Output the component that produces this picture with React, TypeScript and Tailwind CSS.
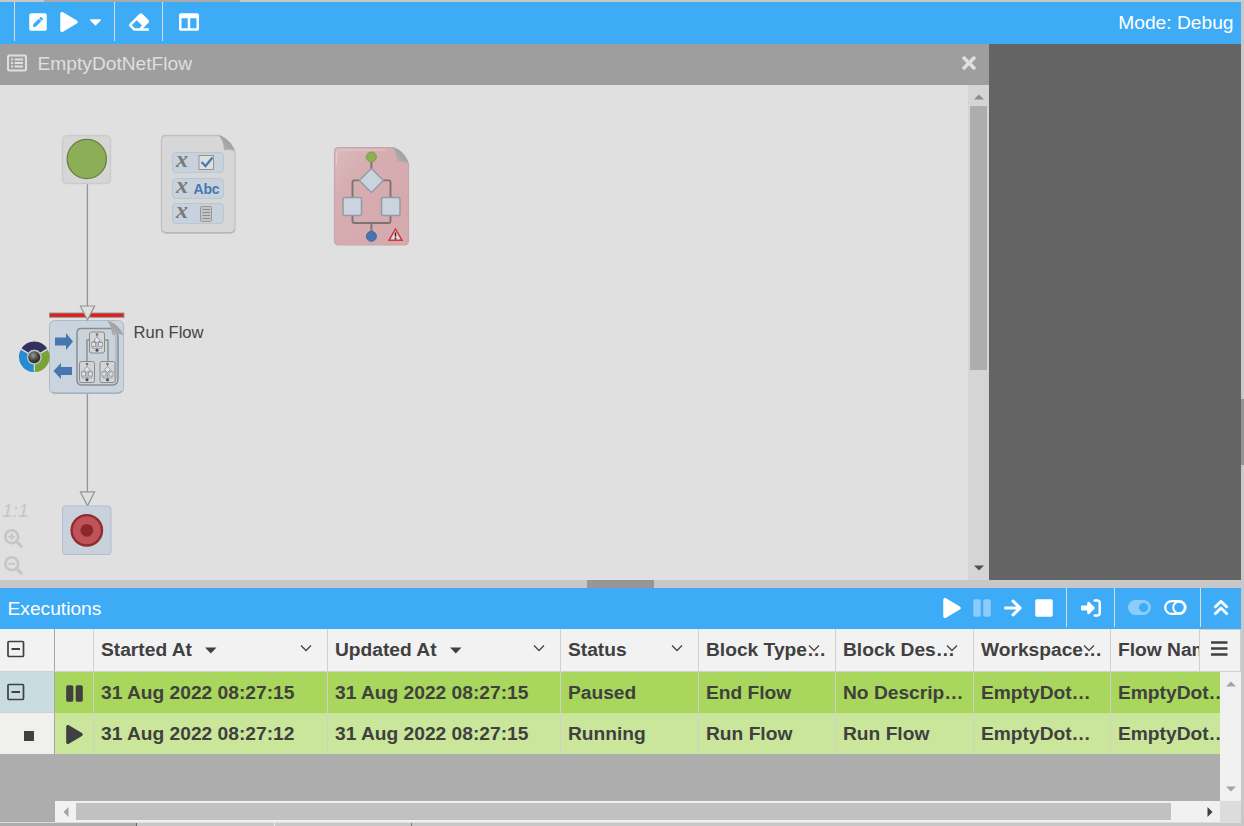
import type { ReactNode } from "react";
import {
  FaArrowRight,
  FaCaretDown,
  FaColumns,
  FaEraser,
  FaPause,
  FaPenSquare,
  FaPlay,
  FaSearchMinus,
  FaSearchPlus,
  FaStop,
  FaTimes,
} from "react-icons/fa";
import { FaAnglesUp, FaRightToBracket } from "react-icons/fa6";

function Slot({ w, children }: { w: string; children?: ReactNode }) {
  return <div className={`flex h-full shrink-0 items-center justify-center ${w}`}>{children}</div>;
}

function Divider() {
  return <div className="h-[39px] w-px shrink-0 self-start bg-[#d9dde0]" />;
}

function Toolbar() {
  return (
    <div className="flex h-[42px] items-center bg-[#3dabf5] pr-[7.500px] text-white">
      <Slot w="w-[14px]" />
      <Divider />
      <Slot w="w-[45px] pb-[2px]"><FaPenSquare size={20} /></Slot>
      <Slot w="w-[17px] pb-[2px]"><FaPlay size={20} className="shrink-0" /></Slot>
      <Slot w="w-[37px] pb-[3px]"><FaCaretDown size={19} /></Slot>
      <Divider />
      <Slot w="w-[47px] pb-[2px]"><FaEraser size={20} /></Slot>
      <Divider />
      <Slot w="w-[51px] pb-[2px]"><FaColumns size={20} /></Slot>
      <div className="ml-auto pb-px text-[19.200px] leading-none">Mode: Debug</div>
    </div>
  );
}

function MiniFlow({ x, y }: { x: number; y: number }) {
  return (
    <g transform={`translate(${x} ${y})`} strokeWidth="1">
      <rect x="0.5" y="0.5" width="15" height="21" rx="2" fill="#d5d5d5" stroke="#8a8a8a" />
      <path d="M8 2v17M3.500 13v-3h9v3M3.500 13v4h9v-4" fill="none" stroke="#a0a0a0" />
      <path d="M8 5.500l3 3-3 3-3-3z" fill="#dce4ea" stroke="#9aa3ab" />
      <rect x="2.500" y="11" width="4" height="4" fill="#dce4ea" stroke="#9aa3ab" />
      <rect x="9.500" y="11" width="4" height="4" fill="#dce4ea" stroke="#9aa3ab" />
      <circle cx="8" cy="3" r="1.300" fill="#777" />
      <circle cx="8" cy="18.700" r="1.500" fill="#4a4480" />
    </g>
  );
}

function VariableChip({ y, children }: { y: number; children: ReactNode }) {
  return (
    <g>
      <rect x="172.500" y={y} width="51" height="20" rx="3.500" fill="#c8d2dc" stroke="#b9c7d5" />
      <text x="176" y={y + 14.500} fontSize="24" fontStyle="italic" fontWeight="bold" fill="#7a7a7a" className="font-['Liberation_Serif',serif]">
        x
      </text>
      {children}
    </g>
  );
}

function Diagram() {
  return (
    <svg width="968" height="495" viewBox="0 85 968 495" className="block">
      <defs>
        <linearGradient id="fold" x1="0" y1="1" x2="1" y2="0">
          <stop offset="0" stopColor="#b8b8b8" />
          <stop offset="1" stopColor="#909090" />
        </linearGradient>
        <radialGradient id="ball" cx=".4" cy=".35">
          <stop offset="0" stopColor="#999" />
          <stop offset="1" stopColor="#333" />
        </radialGradient>
        <linearGradient id="pink" x1="0" y1="0" x2="1" y2="1">
          <stop offset="0" stopColor="#dbbabd" />
          <stop offset=".3" stopColor="#d6adb1" />
          <stop offset="1" stopColor="#d5a9ad" />
        </linearGradient>
      </defs>

      <path d="M87.400 184v122M87.400 394v98" stroke="#949494" strokeWidth="1.300" />

      <rect x="62.500" y="135.500" width="48" height="48" rx="4.500" fill="#d6d6d6" stroke="#cbcbcb" strokeWidth="1.500" />
      <circle cx="86.800" cy="159" r="19.600" fill="#8dae57" stroke="#66803f" strokeWidth="1.300" />

      <path d="M166 135.500H219q5 3 5.500 14q6-1 10.500 2v77q0 4.500-4.500 4.500H166q-4.500 0-4.500-4.500V140q0-4.500 4.500-4.500z" fill="#d7d7d7" stroke="#c0c0c0" strokeWidth="1.300" />
      <path d="M163.500 231q1.500 1.800 4 1.800h62q4 0 5-3.500" fill="none" stroke="#b2b2b2" />
      <path d="M219 135c7 2.500 13 8 16 15.500-4-1.500-8-1.500-11-.5 0-6-2-11-5-15z" fill="url(#fold)" />
      <VariableChip y={152.500}>
        <rect x="199" y="155.500" width="14.500" height="14" fill="#dfdfdf" stroke="#959595" />
        <path d="M201.500 162l4 4 7-8.500" fill="none" stroke="#4679b5" strokeWidth="2.200" />
      </VariableChip>
      <VariableChip y={178.500}>
        <text x="193.500" y="194" fontSize="14" fontWeight="bold" fill="#4678b3" textLength="26" className="font-['Liberation_Sans',sans-serif]">
          Abc
        </text>
      </VariableChip>
      <VariableChip y={203.500}>
        <rect x="200.500" y="206.500" width="11" height="15" rx="1" fill="#c4c4c4" stroke="#979797" />
        <path d="M202.500 209.500h7.500m-7.500 3h7.500m-7.500 3h7.500m-7.500 3h7.500" stroke="#8a8a8a" strokeWidth="1.200" />
      </VariableChip>

      <path d="M338.500 147.500H393q4 4 4 14.500q6-1.500 11.500 1v77.500q0 4.500-4.500 4.500h-65.500q-4 0-4-4.500V152q0-4.500 4-4.500z" fill="url(#pink)" stroke="#c7a5a8" strokeWidth="1.200" />
      <path d="M336.500 165v-10q0-5 5-5h44" fill="none" stroke="#e2cbcd" strokeWidth="1.200" />
      <path d="M393 147c7 2 13 8 15.500 15.500-4-1-8-1-11.500-.5 1-5-1-11-4-15z" fill="url(#fold)" />
      <g fill="none" stroke="#7a7474" strokeWidth="1.900">
        <path d="M371.400 161v9M361 180.400h-7q-1.500 0-1.500 2V197M382 180.400h7q1.500 0 1.500 2V197M352.500 215v6q0 2 2 2h34q2 0 2-2v-6M371.400 223v9" />
      </g>
      <circle cx="371.400" cy="157" r="5" fill="#8fb052" stroke="#84994f" />
      <path d="M371.400 168.500l12 12-12 12-12-12z" fill="#cbd4de" stroke="#929ba4" strokeWidth="1.400" />
      <rect x="343" y="197.500" width="18.500" height="18" rx="1.500" fill="#cbd4de" stroke="#929ba4" strokeWidth="1.500" />
      <rect x="381.500" y="197.500" width="18.500" height="18" rx="1.500" fill="#cbd4de" stroke="#929ba4" strokeWidth="1.500" />
      <circle cx="371.400" cy="236.300" r="5" fill="#4874b5" stroke="#4468a0" />
      <path d="M395.500 229l6.500 11.300h-13z" fill="#e4dada" stroke="#cf3539" strokeWidth="1.500" />
      <path d="M395.500 232.500v4m0 1v2" stroke="#222" strokeWidth="1.500" />

      <rect x="49.500" y="320.500" width="74" height="73" rx="5" fill="#c9d4de" stroke="#aeb9c3" />
      <path d="M52 391.800q1 1.200 4 1.200h60q4 0 6-2" fill="none" stroke="#9aa8b5" />
      <path d="M55 337.500h11v-4.500l7 8.500-7 8.500v-4.500H55zM72 367H61v-4l-7.500 8 7.500 8v-4h11z" fill="#4777af" />
      <path d="M81 328.500h30q6 2 7 8v42q0 6-5 6.500H82q-5 0-5-5v-47q0-4.500 4-4.500z" fill="#cbd3da" stroke="#868d95" strokeWidth="1.500" />
      <path d="M114 334q2 2 2 5v39q0 4-4 5" fill="none" stroke="#9eabb7" />
      <path d="M91 340h-4v23M104 340h4v23" fill="none" stroke="#8c9197" strokeWidth="1.500" />
      <MiniFlow x={89} y={331.500} />
      <MiniFlow x={79} y={361} />
      <MiniFlow x={99.500} y={361} />
      <path d="M107 320.500c8 2 14 8 16.500 15-4-2-8-2-11.500-.5 0-6-2-11-5-14.500z" fill="url(#fold)" />
      <rect x="49.500" y="313" width="74.500" height="4.300" fill="#de1d1f" stroke="#969696" strokeWidth="1" />
      <path d="M80.400 306h14.200L87.500 320zM80.400 491.800h14.200l-7.100 14z" fill="#e0e0e0" stroke="#949494" strokeWidth="1.200" />

      <g fill="none" strokeWidth="8.200">
        <path d="M25 350.800A11 11 0 0 1 43.800 351" stroke="#32315f" />
        <path d="M24.400 351.800A11 11 0 0 0 34.100 368" stroke="#268bd1" />
        <path d="M44.200 351.800A11 11 0 0 1 34.500 368" stroke="#7aa337" />
        <path d="M34.300 357v14M34.300 357l-13-8M34.300 357l13-8" stroke="#d5dadd" strokeWidth="1.200" />
      </g>
      <circle cx="34.300" cy="357.200" r="7.500" fill="#b9bec2" />
      <circle cx="34.300" cy="357.200" r="6" fill="url(#ball)" />

      <rect x="62.500" y="506" width="48.500" height="48.500" rx="3" fill="#c8d2dc" stroke="#b2bdc8" />
      <circle cx="86.800" cy="530.300" r="15.200" fill="#c05359" stroke="#922c2c" strokeWidth="2.400" />
      <circle cx="86.800" cy="530.300" r="6.400" fill="#8b2928" />
    </svg>
  );
}

function Triangle({ d, fill }: { d: string; fill: string }) {
  return (
    <svg width="10" height="10" viewBox="0 0 10 10" className="block" fill={fill}>
      <path d={d} />
    </svg>
  );
}

const UP = "M0 7.500L5 2.500L10 7.500Z";
const DOWN = "M0 2.500H10L5 7.500Z";
const LEFT = "M7.500 0V10L2.500 5Z";
const RIGHT = "M2.500 0V10L7.500 5Z";

function ListIcon() {
  return (
    <svg width="20" height="18" viewBox="0 0 20 18" fill="none" stroke="currentColor">
      <rect x="1" y="1.500" width="18" height="15" rx="1.500" strokeWidth="2" />
      <path d="M7.500 5.500H16M7.500 9H16M7.500 12.500H16M4 5.500h2M4 9h2M4 12.500h2" strokeWidth="2" />
    </svg>
  );
}

function Workspace() {
  return (
    <div className="flex h-[536px]">
      <div className="flex w-[989px] flex-col">
        <div className="flex h-[41px] items-center bg-[#9e9e9e] pr-[10px] pb-[3px] pl-[7px] text-[#dfdfdf]">
          <ListIcon />
          <div className="mt-[2px] ml-[10.500px] text-[19.200px] leading-none">EmptyDotNetFlow</div>
          <FaTimes size={20} className="ml-auto" />
        </div>
        <div className="flex h-[495px] bg-[#e0e0e0]">
          <div className="relative w-[968px]">
            <Diagram />
            <div className="absolute top-[238px] left-[133.500px] text-[16.600px] leading-[20px] whitespace-nowrap text-[#454545]">Run Flow</div>
            <div className="absolute top-[415px] left-[2px] flex flex-col text-[#c6c6c6]">
              <span className="text-[19.200px] leading-[22px] italic">1:1</span>
              <FaSearchPlus size={19} className="mt-[7px] ml-[1.500px]" />
              <FaSearchMinus size={19} className="mt-[8px] ml-[1.500px]" />
            </div>
          </div>
          <div className="flex w-[21px] flex-col items-center bg-[#d5d5d5]">
            <div className="flex h-[21px] items-center pt-[3px]"><Triangle d={UP} fill="#8d8d8d" /></div>
            <div className="h-[264px] w-[17px] bg-[#adadad]" />
            <div className="mt-auto flex h-[21px] items-center pb-[3px]"><Triangle d={DOWN} fill="#505050" /></div>
          </div>
        </div>
      </div>
      <div className="flex-1 bg-[#646464]" />
    </div>
  );
}

function Toggle({ on }: { on: boolean }) {
  return on ? (
    <svg width="23" height="16" viewBox="0 0 23 16" className="opacity-40">
      <rect x="0" y="0" width="23" height="15" rx="7.500" fill="currentColor" />
      <circle cx="15.500" cy="7.500" r="4.500" fill="#3dabf5" />
    </svg>
  ) : (
    <svg width="23" height="16" viewBox="0 0 23 16" fill="none" stroke="currentColor" strokeWidth="2.200">
      <rect x="1.200" y="1.100" width="20.300" height="12.800" rx="6.400" />
      <circle cx="15" cy="7.500" r="5.800" strokeWidth="2" />
    </svg>
  );
}

function ExecutionsBar() {
  return (
    <div className="flex h-[41px] items-center bg-[#3dabf5] text-white">
      <div className="w-[936px] pl-[7.500px] text-[19.200px] leading-none">Executions</div>
      <Slot w="w-[31px] pb-px"><FaPlay size={20} /></Slot>
      <Slot w="w-[30px] pb-px"><FaPause size={20} className="opacity-40" /></Slot>
      <Slot w="w-[31px] pb-px"><FaArrowRight size={20} /></Slot>
      <Slot w="w-[31px] pb-px"><FaStop size={20} /></Slot>
      <Slot w="w-[7px]" />
      <Divider />
      <Slot w="w-[47px] pb-px"><FaRightToBracket size={20} /></Slot>
      <Divider />
      <Slot w="w-[6px]" />
      <Slot w="w-[37px] pb-px"><Toggle on /></Slot>
      <Slot w="w-[35px] pb-px"><Toggle on={false} /></Slot>
      <Slot w="w-[7px]" />
      <Divider />
      <Slot w="w-[40px] pb-px"><FaAnglesUp size={18} stroke="currentColor" strokeWidth={22} /></Slot>
    </div>
  );
}

const columns = [
  { label: "Started At", width: "w-[234px]", sorted: true, rows: ["31 Aug 2022 08:27:15", "31 Aug 2022 08:27:12"] },
  { label: "Updated At", width: "w-[233px]", sorted: true, rows: ["31 Aug 2022 08:27:15", "31 Aug 2022 08:27:15"] },
  { label: "Status", width: "w-[138px]", rows: ["Paused", "Running"] },
  { label: "Block Type…", width: "w-[137px]", rows: ["End Flow", "Run Flow"] },
  { label: "Block Des…", width: "w-[138px]", rows: ["No Descrip…", "Run Flow"] },
  { label: "Workspace…", width: "w-[137px]", rows: ["EmptyDot…", "EmptyDot…"] },
  { label: "Flow Name", width: "w-[138px]", rows: ["EmptyDot…", "EmptyDot…"] },
];

function Collapse() {
  return (
    <svg width="18" height="18" viewBox="0 0 18 18" fill="none" stroke="#404040" strokeWidth="1.700">
      <rect x="1" y="1.500" width="15.500" height="15" rx="1" />
      <path d="M4.500 9h8.500" strokeWidth="2" />
    </svg>
  );
}

function GridHeader() {
  return (
    <div className="flex h-[43px] border-b border-[#d0d0d0] bg-[#f2f2f2]">
      <div className="flex w-[55px] items-center border-r border-[#a6a6a6] pb-[2px] pl-[7px]"><Collapse /></div>
      <div className="flex w-[1144px] overflow-hidden">
        <div className="w-[39px] shrink-0 border-r border-[#d0d0d0]" />
        {columns.map((c) => (
          <div key={c.label} className={`relative flex shrink-0 items-center border-r border-[#d0d0d0] pb-px pl-[7px] whitespace-nowrap ${c.width}`}>
            {c.label}
            {c.sorted && (
              <svg width="12" height="7" viewBox="0 0 12 7" className="mt-px ml-[13px]">
                <path d="M0 .5h11.500L5.800 6.500z" fill="#404040" />
              </svg>
            )}
            <svg width="12" height="8" viewBox="0 0 12 8" className="absolute top-[15px] right-[15px]" fill="none" stroke="#454545" strokeWidth="1.300">
              <path d="M1 1.500l5 5 5-5" />
            </svg>
          </div>
        ))}
      </div>
      <div className="flex flex-1 items-center border border-b-0 border-[#d0d0d0] pb-[4px] pl-[11px]">
        <svg width="17" height="15" viewBox="0 0 17 15" stroke="#404040" strokeWidth="2.500">
          <path d="M0 1.500h16.500M0 7.500h16.500M0 13.500h16.500" />
        </svg>
      </div>
    </div>
  );
}

function GridRow({ index }: { index: number }) {
  const paused = index === 0;
  return (
    <div className={`flex h-[41px] overflow-hidden ${paused ? "bg-[#a9d65c]" : "bg-[#c9e69a]"}`}>
      <div className={`flex w-[55px] shrink-0 items-center border-r border-[#a6a6a6] ${paused ? "border-b border-b-[#d0d0d0] bg-[#c9dcdf] pb-px pl-[7px]" : "bg-[#f0f0ee] pt-[4px] pl-[24px]"}`}>
        {paused ? <Collapse /> : <div className="size-[10px] bg-[#404040]" />}
      </div>
      <div className="flex w-[39px] shrink-0 items-center justify-center border-r border-[#d0d0d0] pt-[2px]">
        {paused ? <FaPause size={19} /> : <FaPlay size={19} />}
      </div>
      {columns.map((c) => (
        <div key={c.label} className={`flex shrink-0 items-center border-r border-[#d0d0d0] pl-[7px] whitespace-nowrap ${c.width}`}>
          {c.rows[index]}
        </div>
      ))}
    </div>
  );
}

function Grid() {
  return (
    <div className="text-[19.200px] leading-none font-bold text-[#404040]">
      <GridHeader />
      <div className="flex h-[150px]">
        <div className="flex w-[1220px] flex-col bg-[#adadad]">
          <GridRow index={0} />
          <GridRow index={1} />
          <div className="mt-auto ml-[55px] flex h-[21px] items-center bg-[#f1f1f1]">
            <div className="flex w-[21px] justify-center"><Triangle d={LEFT} fill="#a3a3a3" /></div>
            <div className="h-[17px] w-[1095px] bg-[#c1c1c1]" />
            <div className="ml-auto flex w-[21px] justify-center"><Triangle d={RIGHT} fill="#404040" /></div>
          </div>
        </div>
        <div className="flex flex-1 flex-col">
          <div className="flex flex-1 flex-col items-center justify-between bg-[#f1f1f1] pt-[7px] pb-[7px]">
            <Triangle d={UP} fill="#a3a3a3" />
            <Triangle d={DOWN} fill="#a3a3a3" />
          </div>
          <div className="h-[21px] bg-[#dcdcdc]" />
        </div>
      </div>
    </div>
  );
}

export default function App() {
  return (
    <div className="flex h-[826px] w-[1244px] overflow-hidden bg-[#c8c8c8] font-['Liberation_Sans',Arial,sans-serif]">
      <div className="flex w-[1241px] flex-col">
        <div className="flex h-[2px]"><div className="ml-[44px] w-[196px] bg-[#aaaaaa]" /></div>
        <Toolbar />
        <Workspace />
        <div className="flex h-[8px] pl-[587px]"><div className="w-[67px] bg-[#969696]" /></div>
        <ExecutionsBar />
        <Grid />
        <div className="flex h-[4px] border-t border-[#dddddd]">
          <div className="w-[137px] border-r border-[#666] bg-[#adadad]" />
          <div className="w-[138px] border-r border-[#eeeeee]" />
          <div className="w-[137px] border-r border-[#777]" />
        </div>
      </div>
      <div className="flex w-[3px] flex-col pt-[399px]"><div className="h-[66px] bg-[#969696]" /></div>
    </div>
  );
}
